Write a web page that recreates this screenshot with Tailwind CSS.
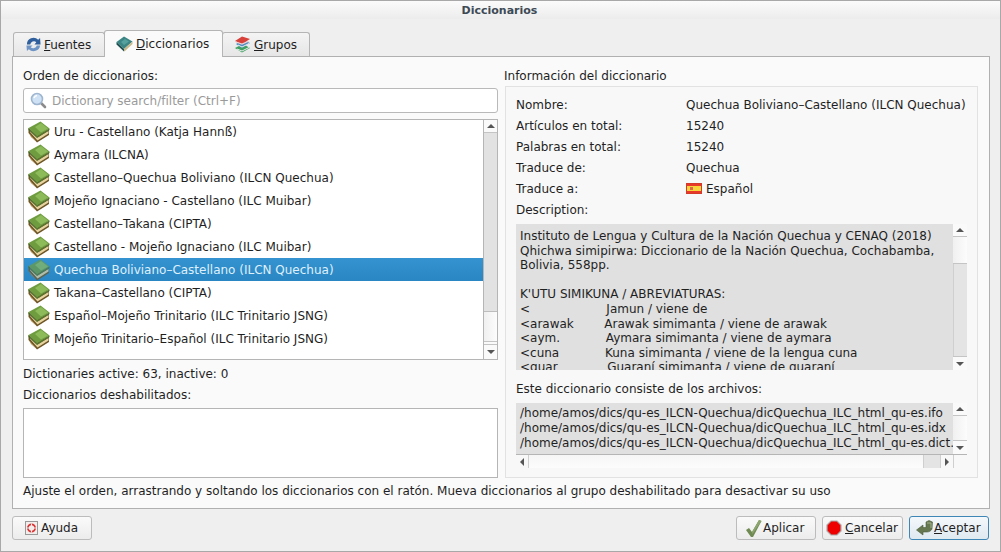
<!DOCTYPE html>
<html lang="es">
<head>
<meta charset="UTF-8">
<title>Diccionarios</title>
<script src="https://cdn.jsdelivr.net/npm/@tailwindcss/browser@4"></script>
</head>
<body class="bg-[#efefef]">
<svg class="hidden" width="0" height="0">
  <symbol id="book" viewBox="0 0 22 22">
    <path d="M0.5 7 L0.5 12 L9 21.5 L21 14 L21 8 L9 14 Z" fill="#6e5526"/>
    <path d="M2 11 L9.5 19.5 L20.5 12.5 L20.5 10 L9.5 16.5 L2 8 Z" fill="#e6d3a0"/>
    <path d="M1 12 L8 20.5 L3 16 Z" fill="#a8803f"/>
    <path d="M0.5 7 L12.5 0.5 L21.5 7.5 L9 15.5 Z" fill="#6f9c3f"/>
    <path d="M0.5 7 L9 15.5 L9 17 L0.5 9 Z" fill="#48692a"/>
    <path d="M9 15.5 L21.5 7.5 L21.5 9 L9 17 Z" fill="#55782f"/>
    <path d="M7 6 L13 2 L20 7.5 L13 11.5 Z" fill="#8dbb5a"/>
  </symbol>
</svg>
<div class="w-[1001px] h-[552px] overflow-hidden border border-[#a8a8a8] flex flex-col font-['DejaVu_Sans',sans-serif] text-[12px] leading-[15px] text-[#1f1f1f]">

  <div class="h-[18px] shrink-0 flex items-center justify-center pr-[2px] bg-gradient-to-b from-[#fbfbfb] to-[#ececec] text-[11px] font-bold text-[#3d4a55]">Diccionarios</div>

  <div class="pl-[11px] pr-[10px] pt-[11px] flex flex-col">
    <!-- tabs -->
    <div class="flex items-end h-[27px] pl-px relative z-10 -mb-px">
      <div class="w-[92px] h-[24px] flex items-center pl-[12px] gap-[3px] bg-gradient-to-b from-[#f4f4f4] to-[#e6e6e6] border border-b-0 border-[#b5b5b5] rounded-t-[3px] mb-px">
        <svg width="15" height="15" viewBox="0 0 16 16"><path d="M1 8 A7 7 0 0 1 13 3 L15 1 L15.5 8 L9 8 L11 5.5 A4 4 0 0 0 4.5 8 Z" fill="#2f5f9c"/><path d="M15 9 A7 7 0 0 1 3 13 L1 15 L0.5 9 L7 9 L5 11 A4 4 0 0 0 11.5 9 Z" fill="#6d94c4"/></svg>
        <span class="mt-px"><u>F</u>uentes</span>
      </div>
      <div class="w-[119px] h-[27px] flex items-center pl-[11px] gap-[3px] bg-[#fafafa] border border-b-0 border-[#b5b5b5] rounded-t-[3px] -mx-px relative">
        <svg width="17" height="16" viewBox="0 0 17 16"><path d="M0.5 6 L8 0.5 L16.5 5.5 L8 13 Z" fill="#3b8584"/><path d="M0.5 6 L8 13 L8 15.5 L0.5 8.5 Z" fill="#1f4f50"/><path d="M8 13 L16.5 5.5 L16.5 8 L9 15 L8 15.5 Z" fill="#c9b88a"/><path d="M5 6 L9 3 L13 5.5 L8 9 Z" fill="#56a09e"/></svg>
        <span><u>D</u>iccionarios</span>
      </div>
      <div class="w-[88px] h-[24px] flex items-center pl-[11px] gap-[3px] bg-gradient-to-b from-[#f4f4f4] to-[#e6e6e6] border border-b-0 border-[#b5b5b5] rounded-t-[3px] mb-px">
        <svg width="17" height="17" viewBox="0 0 17 17"><path d="M1 12 L9 8 L16 12 L8 16.5 Z" fill="#3fa060"/><path d="M3 13 L8 15 L15 11.5" fill="none" stroke="#eee"/><path d="M2 8 L9 4 L16 7 L8 12 Z" fill="#4f8fc0"/><path d="M4 9 L8 11 L15 7.5" fill="none" stroke="#eee"/><path d="M1 5 L8 0.5 L16 3 L8 8 Z" fill="#d8403a"/><path d="M2 6 L8 8 L15 5" fill="none" stroke="#f4d0d0" stroke-width="1.2"/></svg>
        <span class="mt-px"><u>G</u>rupos</span>
      </div>
    </div>

    <!-- pane -->
    <div class="h-[453px] bg-[#fafafa] border border-[#b0b0b0] flex flex-col pl-[10px] pr-[11px]">
      <div class="flex gap-[6px] h-[421px]">
        <!-- left column -->
        <div class="w-[475px] shrink-0 flex flex-col">
          <div class="h-[15px] mt-[12px]">Orden de diccionarios:</div>
          <div class="h-[25px] mt-[4px] shrink-0 bg-white border border-[#b9b9b9] rounded-[3px] flex items-center pl-[6px] gap-[5px] text-[#9a9a9a]">
            <svg width="17" height="17" viewBox="0 0 17 17"><path d="M10 10 L15 15" stroke="#8b8b8b" stroke-width="2.6" stroke-linecap="round"/><circle cx="7" cy="7" r="5.5" fill="#cfe2f5" stroke="#9fb6cf" stroke-width="1.6"/><path d="M4 6 A3.5 3.5 0 0 1 7 3.5" stroke="#fff" fill="none" stroke-width="1.4"/></svg>
            <span class="pt-[2px]">Dictionary search/filter (Ctrl+F)</span>
          </div>
          <!-- dictionary list -->
          <div class="h-[241px] mt-[6px] shrink-0 bg-white border border-[#b5b5b5] flex">
            <ul class="w-[459px] shrink-0 [&_span]:pt-[2px]">
              <li class="h-[23px] flex items-center pl-[4px] gap-[4px]"><svg width="22" height="22"><use href="#book"/></svg><span>Uru - Castellano (Katja Hannß)</span></li>
              <li class="h-[23px] flex items-center pl-[4px] gap-[4px]"><svg width="22" height="22"><use href="#book"/></svg><span>Aymara (ILCNA)</span></li>
              <li class="h-[23px] flex items-center pl-[4px] gap-[4px]"><svg width="22" height="22"><use href="#book"/></svg><span>Castellano–Quechua Boliviano (ILCN Quechua)</span></li>
              <li class="h-[23px] flex items-center pl-[4px] gap-[4px]"><svg width="22" height="22"><use href="#book"/></svg><span>Mojeño Ignaciano - Castellano (ILC Muibar)</span></li>
              <li class="h-[23px] flex items-center pl-[4px] gap-[4px]"><svg width="22" height="22"><use href="#book"/></svg><span>Castellano–Takana (CIPTA)</span></li>
              <li class="h-[23px] flex items-center pl-[4px] gap-[4px]"><svg width="22" height="22"><use href="#book"/></svg><span>Castellano - Mojeño Ignaciano (ILC Muibar)</span></li>
              <li class="h-[23px] flex items-center pl-[4px] gap-[4px] bg-gradient-to-b from-[#3493d0] to-[#2a86c3] text-[#dff0fb]"><svg width="22" height="22" class="opacity-70"><use href="#book"/></svg><span>Quechua Boliviano–Castellano (ILCN Quechua)</span></li>
              <li class="h-[23px] flex items-center pl-[4px] gap-[4px]"><svg width="22" height="22"><use href="#book"/></svg><span>Takana–Castellano (CIPTA)</span></li>
              <li class="h-[23px] flex items-center pl-[4px] gap-[4px]"><svg width="22" height="22"><use href="#book"/></svg><span>Español–Mojeño Trinitario (ILC Trinitario JSNG)</span></li>
              <li class="h-[23px] flex items-center pl-[4px] gap-[4px]"><svg width="22" height="22"><use href="#book"/></svg><span>Mojeño Trinitario–Español (ILC Trinitario JSNG)</span></li>
            </ul>
            <div class="w-[14px] shrink-0 flex flex-col border-l border-[#b5b5b5] bg-[#fafafa]">
              <div class="h-[13px] shrink-0 flex items-center justify-center border-b border-[#c4c4c4]"><div class="w-0 h-0 border-x-[4px] border-x-transparent border-b-[4px] border-b-[#555]"></div></div>
              <div class="h-[179px] shrink-0 bg-[#e2e2e2] border-b border-[#bdbdbd]"></div>
              <div class="flex-1 bg-gradient-to-r from-[#f0f0f0] to-[#fcfcfc] border-b border-[#c4c4c4]"></div>
              <div class="h-[3px] shrink-0 border-b border-[#c4c4c4]"></div>
              <div class="h-[14px] shrink-0 flex items-center justify-center"><div class="w-0 h-0 border-x-[4px] border-x-transparent border-t-[4px] border-t-[#555]"></div></div>
            </div>
          </div>
          <div class="h-[15px] mt-[7px]">Dictionaries active: 63, inactive: 0</div>
          <div class="h-[15px] mt-[6px]">Diccionarios deshabilitados:</div>
          <div class="h-[70px] mt-[5px] shrink-0 bg-white border border-[#b5b5b5]"></div>
        </div>

        <!-- right column -->
        <div class="flex-1 min-w-0 flex flex-col">
          <div class="h-[15px] mt-[12px]">Información del diccionario</div>
          <div class="h-[392px] mt-[2px] ml-px bg-[#f8f8f8] border border-[#e2e2e2] pl-[10px] pr-[10px] flex flex-col">
            <dl class="grid grid-cols-[170px_1fr] auto-rows-[21px] items-center pt-[8px]">
              <dt>Nombre:</dt><dd>Quechua Boliviano–Castellano (ILCN Quechua)</dd>
              <dt>Artículos en total:</dt><dd>15240</dd>
              <dt>Palabras en total:</dt><dd>15240</dd>
              <dt>Traduce de:</dt><dd>Quechua</dd>
              <dt>Traduce a:</dt>
              <dd class="flex items-center gap-[4px]">
                <span class="w-[16px] h-[11px] flex flex-col border border-[#d43a2a] bg-[#e8382a] mb-[3px]"><span class="mt-[2px] h-[5px] bg-[#f6d53a] pl-[3px] pt-px"><span class="block w-[3px] h-[3px] bg-[#d9694a]"></span></span></span>
                <span>Español</span>
              </dd>
              <dt>Description:</dt><dd></dd>
            </dl>
            <!-- description -->
            <div class="h-[146px] mt-[3px] shrink-0 flex">
              <div class="flex-1 min-w-0 bg-[#e0e0e0] pl-[4px] pt-[5px] overflow-hidden whitespace-pre leading-[14.6px]">Instituto de Lengua y Cultura de la Nación Quechua y CENAQ (2018)
Qhichwa simipirwa: Diccionario de la Nación Quechua, Cochabamba,
Bolivia, 558pp.

K'UTU SIMIKUNA / ABREVIATURAS:
&lt;                    Jamun / viene de
&lt;arawak        Arawak simimanta / viene de arawak
&lt;aym.            Aymara simimanta / viene de aymara
&lt;cuna            Kuna simimanta / viene de la lengua cuna
&lt;guar             Guaraní simimanta / viene de guaraní</div>
              <div class="w-[14px] shrink-0 flex flex-col bg-[#fafafa]">
                <div class="h-[13px] shrink-0 flex items-center justify-center border-b border-[#c4c4c4]"><div class="w-0 h-0 border-x-[4px] border-x-transparent border-b-[4px] border-b-[#555]"></div></div>
                <div class="h-[27px] shrink-0 bg-gradient-to-r from-[#f0f0f0] to-[#fcfcfc] border-b border-[#c4c4c4]"></div>
                <div class="flex-1 bg-[#e4e4e4] border-l border-[#cfcfcf]"></div>
                <div class="h-[14px] shrink-0 flex items-center justify-center border-t border-[#c4c4c4]"><div class="w-0 h-0 border-x-[4px] border-x-transparent border-t-[4px] border-t-[#555]"></div></div>
              </div>
            </div>
            <div class="h-[15px] mt-[12px]">Este diccionario consiste de los archivos:</div>
            <!-- files -->
            <div class="h-[65px] mt-[6px] shrink-0 flex flex-col">
              <div class="h-[51px] flex shrink-0">
                <div class="flex-1 min-w-0 bg-[#e0e0e0] pl-[4px] pt-[3px] overflow-hidden whitespace-pre leading-[14.8px]">/home/amos/dics/qu-es_ILCN-Quechua/dicQuechua_ILC_html_qu-es.ifo
/home/amos/dics/qu-es_ILCN-Quechua/dicQuechua_ILC_html_qu-es.idx
/home/amos/dics/qu-es_ILCN-Quechua/dicQuechua_ILC_html_qu-es.dict.dz</div>
                <div class="w-[14px] shrink-0 flex flex-col bg-[#fafafa]">
                  <div class="h-[13px] shrink-0 flex items-center justify-center border-b border-[#c4c4c4]"><div class="w-0 h-0 border-x-[4px] border-x-transparent border-b-[4px] border-b-[#555]"></div></div>
                  <div class="flex-1 bg-gradient-to-r from-[#f0f0f0] to-[#fcfcfc]"></div>
                  <div class="h-[14px] shrink-0 flex items-center justify-center border-t border-[#c4c4c4]"><div class="w-0 h-0 border-x-[4px] border-x-transparent border-t-[4px] border-t-[#555]"></div></div>
                </div>
              </div>
              <div class="h-[14px] flex shrink-0 border-t border-[#b5b5b5]">
                <div class="w-[13px] shrink-0 border-r border-[#cfcfcf] flex items-center justify-center"><div class="w-0 h-0 border-y-[4px] border-y-transparent border-r-[4px] border-r-[#555]"></div></div>
                <div class="flex-1 bg-gradient-to-b from-[#f6f6f6] to-[#fcfcfc]"></div>
                <div class="w-[17px] shrink-0 bg-[#e4e4e4] border-l border-[#cfcfcf]"></div>
                <div class="w-[13px] shrink-0 border-l border-[#cfcfcf] flex items-center justify-center"><div class="w-0 h-0 border-y-[4px] border-y-transparent border-l-[4px] border-l-[#555]"></div></div>
                <div class="w-[14px] shrink-0 border-l border-[#cfcfcf]"></div>
              </div>
            </div>
          </div>
        </div>
      </div>
      <div class="h-[15px] mt-[6px]">Ajuste el orden, arrastrando y soltando los diccionarios con el ratón. Mueva diccionarios al grupo deshabilitado para desactivar su uso</div>
    </div>

    <!-- buttons -->
    <div class="flex items-center mt-[7px] pr-px">
      <button class="w-[80px] h-[24px] flex items-center pl-[12px] gap-[3px] bg-gradient-to-b from-[#fafafa] to-[#ececec] border border-[#bcbcbc] rounded-[3px]">
        <svg width="13" height="16" viewBox="0 0 13 16"><rect x="0.5" y="1.5" width="12" height="13" fill="#f2eeee" stroke="#999"/><circle cx="6.5" cy="8" r="3.6" fill="none" stroke="#d33" stroke-width="1.8"/><path d="M2 8 L11 8 M6.5 3.5 L6.5 12.5" stroke="#f2eeee" stroke-width="1"/></svg>
        <span>Ayuda</span>
      </button>
      <div class="flex-1"></div>
      <button class="w-[80px] h-[24px] flex items-center pl-[8px] gap-[1px] bg-gradient-to-b from-[#fafafa] to-[#ececec] border border-[#bcbcbc] rounded-[3px]">
        <svg width="17" height="19" viewBox="0 0 17 19"><path d="M1 11 L4 9 L7 13 L14 1 L16.5 2 L8 18 L6 18 Z" fill="#6f8a52"/><path d="M7 13 L14 1 L16.5 2 L7.5 15 Z" fill="#8ca56e"/></svg>
        <span>Aplicar</span>
      </button>
      <button class="w-[81px] h-[24px] ml-[6px] flex items-center pl-[3px] gap-[3px] bg-gradient-to-b from-[#fafafa] to-[#ececec] border border-[#bcbcbc] rounded-[3px]">
        <svg width="16" height="16" viewBox="0 0 16 16"><path d="M5 1 L11 1 L15 5 L15 11 L11 15 L5 15 L1 11 L1 5 Z" fill="#e00" stroke="#aaa" stroke-width="1.2"/></svg>
        <span><u>C</u>ancelar</span>
      </button>
      <button class="w-[80px] h-[24px] ml-[6px] flex items-center pl-[6px] gap-[1px] bg-gradient-to-b from-[#f4f8fb] to-[#dfe9f0] border border-[#3d86b5] rounded-[3px]">
        <svg width="17" height="16" viewBox="0 0 17 16"><path d="M0.5 10 L7 5 L7 7.5 L10 7.5 L10 2 L13 0.5 L16.5 2 L16 9 C15 11 13 12 11 12 L7 12 L7 15 Z" fill="#66784f" stroke="#4b5a3a" stroke-width="0.6"/><path d="M11 3 L15 3 L15 8" fill="none" stroke="#a3b38d"/></svg>
        <span><u>A</u>ceptar</span>
      </button>
    </div>
  </div>
</div>
</body>
</html>
